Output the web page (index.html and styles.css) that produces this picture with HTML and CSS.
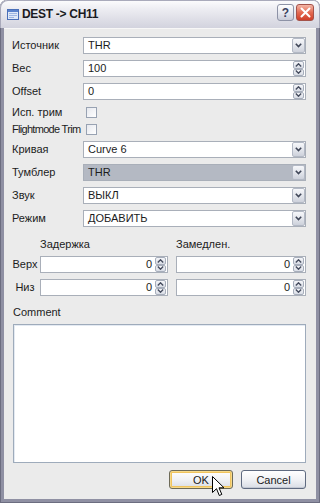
FILE: index.html
```html
<!DOCTYPE html>
<html>
<head>
<meta charset="utf-8">
<title>DEST -> CH11</title>
<link rel="stylesheet" href="styles.css">
</head>
<body>
<div class="window">
  <div class="titlebar">
    <svg class="app-icon" width="12" height="11" viewBox="0 0 12 11">
      <rect x="0.5" y="0.5" width="11" height="10" fill="#dfe8f8" stroke="#4a6fb8"/>
      <rect x="1" y="1" width="10" height="2" fill="#5b82cc"/>
      <rect x="2" y="4" width="8" height="1" fill="#9fb6e2"/>
      <rect x="2" y="6" width="8" height="1" fill="#9fb6e2"/>
      <rect x="2" y="8" width="5" height="1" fill="#9fb6e2"/>
    </svg>
    <span class="title">DEST -&gt; CH11</span>
    <div class="tb-buttons">
      <div class="tb-btn help">?</div>
      <div class="tb-btn close">
        <svg width="11" height="11" viewBox="0 0 11 11"><path d="M1.5 1.5 L9.5 9.5 M9.5 1.5 L1.5 9.5" stroke="#fff" stroke-width="2" stroke-linecap="round"/></svg>
      </div>
    </div>
  </div>

  <div class="client">
    <div class="form">
      <span class="lbl">Источник</span>
      <div class="box combo"><span class="val">THR</span><div class="dd"><svg width="7" height="5" viewBox="0 0 7 5"><path d="M0.8 0.8 L3.5 3.6 L6.2 0.8" fill="none" stroke="#3f4658" stroke-width="1.6"/></svg></div></div>

      <span class="lbl">Вес</span>
      <div class="box spinbox"><span class="val">100</span><div class="spin"><div class="half"><svg width="7" height="4" viewBox="0 0 7 4"><path d="M0.8 3.4 L3.5 0.8 L6.2 3.4" fill="none" stroke="#454c5e" stroke-width="1.4"/></svg></div><div class="half"><svg width="7" height="4" viewBox="0 0 7 4"><path d="M0.8 0.6 L3.5 3.2 L6.2 0.6" fill="none" stroke="#454c5e" stroke-width="1.4"/></svg></div></div></div>

      <span class="lbl">Offset</span>
      <div class="box spinbox"><span class="val">0</span><div class="spin"><div class="half"><svg width="7" height="4" viewBox="0 0 7 4"><path d="M0.8 3.4 L3.5 0.8 L6.2 3.4" fill="none" stroke="#454c5e" stroke-width="1.4"/></svg></div><div class="half"><svg width="7" height="4" viewBox="0 0 7 4"><path d="M0.8 0.6 L3.5 3.2 L6.2 0.6" fill="none" stroke="#454c5e" stroke-width="1.4"/></svg></div></div></div>

      <span class="lbl">Исп. трим</span>
      <div class="check-cell first"><span class="checkbox"></span></div>

      <span class="lbl tight">Flightmode Trim</span>
      <div class="check-cell"><span class="checkbox"></span></div>

      <span class="lbl">Кривая</span>
      <div class="box combo"><span class="val">Curve 6</span><div class="dd"><svg width="7" height="5" viewBox="0 0 7 5"><path d="M0.8 0.8 L3.5 3.6 L6.2 0.8" fill="none" stroke="#3f4658" stroke-width="1.6"/></svg></div></div>

      <span class="lbl">Тумблер</span>
      <div class="box combo selected"><span class="val">THR</span><div class="dd"><svg width="7" height="5" viewBox="0 0 7 5"><path d="M0.8 0.8 L3.5 3.6 L6.2 0.8" fill="none" stroke="#3f4658" stroke-width="1.6"/></svg></div></div>

      <span class="lbl">Звук</span>
      <div class="box combo"><span class="val">ВЫКЛ</span><div class="dd"><svg width="7" height="5" viewBox="0 0 7 5"><path d="M0.8 0.8 L3.5 3.6 L6.2 0.8" fill="none" stroke="#3f4658" stroke-width="1.6"/></svg></div></div>

      <span class="lbl">Режим</span>
      <div class="box combo"><span class="val">ДОБАВИТЬ</span><div class="dd"><svg width="7" height="5" viewBox="0 0 7 5"><path d="M0.8 0.8 L3.5 3.6 L6.2 0.8" fill="none" stroke="#3f4658" stroke-width="1.6"/></svg></div></div>
    </div>

    <div class="delays">
      <span></span>
      <span class="head">Задержка</span>
      <span class="head second">Замедлен.</span>

      <span class="dlbl">Верх</span>
      <div class="box spinbox num"><span class="val">0</span><div class="spin"><div class="half"><svg width="7" height="4" viewBox="0 0 7 4"><path d="M0.8 3.4 L3.5 0.8 L6.2 3.4" fill="none" stroke="#454c5e" stroke-width="1.4"/></svg></div><div class="half"><svg width="7" height="4" viewBox="0 0 7 4"><path d="M0.8 0.6 L3.5 3.2 L6.2 0.6" fill="none" stroke="#454c5e" stroke-width="1.4"/></svg></div></div></div>
      <div class="box spinbox num second"><span class="val">0</span><div class="spin"><div class="half"><svg width="7" height="4" viewBox="0 0 7 4"><path d="M0.8 3.4 L3.5 0.8 L6.2 3.4" fill="none" stroke="#454c5e" stroke-width="1.4"/></svg></div><div class="half"><svg width="7" height="4" viewBox="0 0 7 4"><path d="M0.8 0.6 L3.5 3.2 L6.2 0.6" fill="none" stroke="#454c5e" stroke-width="1.4"/></svg></div></div></div>

      <span class="dlbl">Низ</span>
      <div class="box spinbox num"><span class="val">0</span><div class="spin"><div class="half"><svg width="7" height="4" viewBox="0 0 7 4"><path d="M0.8 3.4 L3.5 0.8 L6.2 3.4" fill="none" stroke="#454c5e" stroke-width="1.4"/></svg></div><div class="half"><svg width="7" height="4" viewBox="0 0 7 4"><path d="M0.8 0.6 L3.5 3.2 L6.2 0.6" fill="none" stroke="#454c5e" stroke-width="1.4"/></svg></div></div></div>
      <div class="box spinbox num second"><span class="val">0</span><div class="spin"><div class="half"><svg width="7" height="4" viewBox="0 0 7 4"><path d="M0.8 3.4 L3.5 0.8 L6.2 3.4" fill="none" stroke="#454c5e" stroke-width="1.4"/></svg></div><div class="half"><svg width="7" height="4" viewBox="0 0 7 4"><path d="M0.8 0.6 L3.5 3.2 L6.2 0.6" fill="none" stroke="#454c5e" stroke-width="1.4"/></svg></div></div></div>
    </div>

    <div class="comment-label">Comment</div>
    <div class="textarea"></div>

    <div class="actions">
      <div class="btn default">OK</div>
      <div class="btn">Cancel</div>
    </div>
  </div>

  <svg class="cursor" width="13" height="21" viewBox="0 0 13 21">
    <path d="M0.5 0.5 L0.5 16.5 L4.5 12.7 L7.3 19.5 L9.8 18.4 L7 11.8 L12 11.8 Z" fill="#fff" stroke="#000" stroke-width="1" stroke-linejoin="miter"/>
  </svg>
</div>
</body>
</html>
```

FILE: styles.css
```css
* { box-sizing: border-box; }
html, body { margin: 0; padding: 0; background: #ffffff; }
body {
  font-family: "Liberation Sans", Arial, sans-serif;
  font-size: 11px;
  color: #1c1c1c;
}

.window {
  position: relative;
  width: 320px;
  height: 503px;
  display: flex;
  flex-direction: column;
  background: #8f90a3;
  border-radius: 7px 7px 0 0;
  overflow: hidden;
  box-shadow: inset 1px 0 0 #6c6d80, inset -1px 0 0 #6c6d80, inset 0 -1px 0 #6c6d80;
}

/* title bar */
.titlebar {
  height: 28px;
  flex: none;
  display: flex;
  align-items: center;
  padding: 0 6px 0 7px;
  background: linear-gradient(#fdfdfe 0%, #eeeef3 30%, #e0e0e8 65%, #d2d3de 100%);
  border-radius: 7px 7px 0 0;
  box-shadow: inset 1px 1px 0 #a9aabb, inset -1px 0 0 #a9aabb;
}
.app-icon { flex: none; margin-right: 3px; }
.title {
  font-weight: bold;
  font-size: 12px;
  letter-spacing: -0.3px;
  color: #1a1a22;
}
.tb-buttons {
  margin-left: auto;
  align-self: flex-start;
  margin-top: 4px;
  display: flex;
  gap: 2px;
}
.tb-btn {
  width: 17px;
  height: 17px;
  border-radius: 3px;
  display: flex;
  align-items: center;
  justify-content: center;
}
.help {
  border: 1px solid #8d92a6;
  background: linear-gradient(#ffffff, #e4e6ee 55%, #c9ccd8);
  color: #3b4260;
  font-weight: bold;
  font-size: 12px;
}
.close {
  width: 18px;
  border: 1px solid #a4524a;
  background: linear-gradient(#f4b6a6, #e46a52 50%, #cf3e28);
}

/* client */
.client {
  flex: 1;
  margin: 0 4px 4px 4px;
  background: #ebebeb;
  display: flex;
  flex-direction: column;
  padding: 9px 10px 10px 8px;
  box-shadow: inset 0 1px 0 #f7f7f7;
}

.form {
  display: grid;
  grid-template-columns: 71px 1fr;
  grid-template-rows: 17px 17px 17px 12px 11px 17px 17px 17px 17px;
  row-gap: 6px;
  align-items: center;
}
.lbl { white-space: nowrap; line-height: 13px; }
.lbl.tight { letter-spacing: -0.7px; }

.box {
  height: 17px;
  border: 1px solid #a9afb9;
  background: #ffffff;
  display: flex;
  align-items: stretch;
}
.box .val {
  flex: 1;
  padding-left: 4px;
  line-height: 15px;
  white-space: nowrap;
  overflow: hidden;
}
.combo.selected { background: #b4b9c3; }

.dd {
  flex: none;
  width: 13px;
  margin: 0 0 0 1px;
  border: 1px solid #b3b9c5;
  border-radius: 2px;
  background: linear-gradient(#f6f7fa, #dfe2e9 60%, #cdd1db);
  display: flex;
  align-items: center;
  justify-content: center;
}

.spin {
  flex: none;
  width: 11px;
  margin: 0 1px 0 1px;
  display: flex;
  flex-direction: column;
}
.spin .half {
  flex: 1;
  border: 1px solid #a7aebb;
  border-radius: 2px;
  background: linear-gradient(#f5f6f9, #d8dce5);
  display: flex;
  align-items: center;
  justify-content: center;
}

.check-cell { display: flex; align-items: flex-end; height: 100%; padding-left: 3px; }
.checkbox {
  width: 11px;
  height: 11px;
  border: 1px solid #98a2b2;
  background: linear-gradient(135deg, #e6e8ee, #ffffff);
}

/* delays */
.delays {
  margin-top: 12px;
  display: grid;
  grid-template-columns: 28px 128px 138px;
  grid-template-rows: 11px 17px 17px;
  row-gap: 6px;
  align-items: center;
}
.head { line-height: 11px; white-space: nowrap; }
.head.second { margin-left: 8px; }
.dlbl { text-align: center; padding-right: 2px; line-height: 13px; }
.num .val { text-align: right; padding: 0 2px 0 0; }
.num.second { margin-left: 8px; }

.comment-label { margin-top: 10px; line-height: 13px; padding-left: 1px; }
.textarea {
  margin-top: 5px;
  flex: 1;
  margin-left: 1px;
  border: 1px solid #9eabbb;
  background: #ffffff;
  box-shadow: inset 1px 1px 0 #e4eaf2;
}

.actions {
  margin-top: 7px;
  display: flex;
  justify-content: flex-end;
  gap: 8px;
}
.btn {
  height: 19px;
  width: 65px;
  border: 1px solid #5f6a80;
  border-radius: 3px;
  background: linear-gradient(#ffffff, #f1f2f5 50%, #d9dde5);
  display: flex;
  align-items: center;
  justify-content: center;
  color: #1a1a1a;
  box-shadow: inset 0 -1px 0 #c3c8d3;
}
.btn.default {
  width: 64px;
  border-color: #6d6a58;
  box-shadow: inset 0 0 0 1px #f6d98a, inset 0 0 0 2px #f0c45e;
}

.cursor {
  position: absolute;
  left: 212px;
  top: 476px;
}
```
